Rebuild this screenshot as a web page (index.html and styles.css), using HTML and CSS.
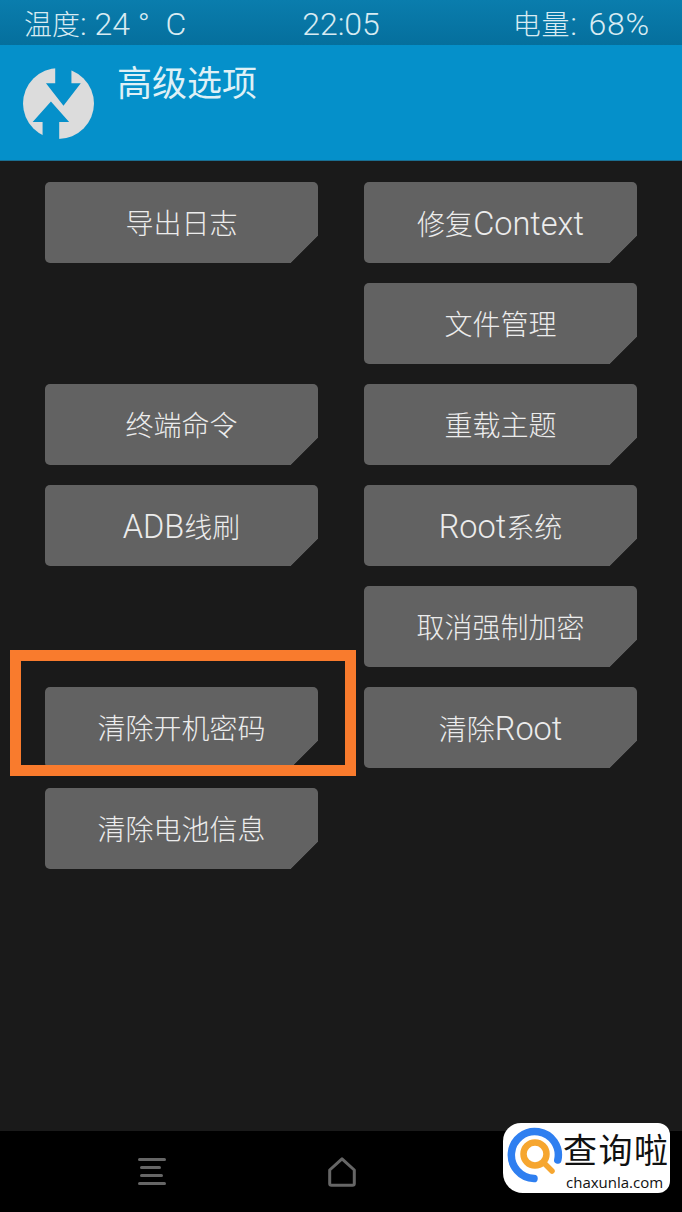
FILE: index.html
```html
<!DOCTYPE html>
<html lang="zh-CN">
<head>
<meta charset="utf-8">
<title>高级选项</title>
<link rel="stylesheet" href="styles.css">
</head>
<body>
<div class="screen">
  <div class="status">
    <span class="status-temp"><span class="cjk">温度</span>: 24 ° &nbsp;C</span>
    <span class="status-time">22:05</span>
    <span class="status-batt"><span class="cjk">电量</span>: 68%</span>
  </div>
  <header class="header">
    <svg class="logo" viewBox="8.6 8 71.4 71.4" aria-hidden="true">
      <circle cx="44.3" cy="43.7" r="35.7" fill="#dcdcdc"/>
      <polygon fill="#0590ca" points="41,0 41,23.3 31.7,23.3 49.3,46 66.7,23.3 57.3,23.3 57.3,0"/>
      <polygon fill="#0590ca" points="28.3,90 28.3,62.3 18.3,62.3 36.7,41.7 55,62.3 45,62.3 45,90"/>
    </svg>
    <h1 class="title">高级选项</h1>
  </header>
  <main class="main">
    <div class="grid">
      <button class="btn">导出日志</button>
      <button class="btn">修复<span class="lat">Context</span></button>
      <div></div>
      <button class="btn">文件管理</button>
      <button class="btn">终端命令</button>
      <button class="btn">重载主题</button>
      <button class="btn"><span class="lat">ADB</span>线刷</button>
      <button class="btn"><span class="lat">Root</span>系统</button>
      <div></div>
      <button class="btn">取消强制加密</button>
      <button class="btn">清除开机密码</button>
      <button class="btn">清除<span class="lat">Root</span></button>
      <button class="btn">清除电池信息</button>
    </div>
    <div class="highlight"></div>
  </main>
  <nav class="nav">
    <div class="nav-slot">
      <svg class="icon-menu" viewBox="0 0 28 27" aria-hidden="true">
        <g stroke="#666" stroke-width="3" stroke-linecap="round">
          <line x1="1.5" y1="1.5" x2="26.5" y2="1.5"/>
          <line x1="3.5" y1="9.5" x2="21.5" y2="9.5"/>
          <line x1="3.5" y1="17.5" x2="23.5" y2="17.5"/>
          <line x1="1.5" y1="25.5" x2="26.5" y2="25.5"/>
        </g>
      </svg>
    </div>
    <div class="nav-slot">
      <svg class="icon-home" viewBox="0 0 28 30" aria-hidden="true">
        <path d="M14 1.8 L26.3 13 V26.5 Q26.3 28.3 24.5 28.3 H3.5 Q1.7 28.3 1.7 26.5 V13 Z" fill="none" stroke="#666" stroke-width="3" stroke-linejoin="round"/>
      </svg>
    </div>
    <div class="nav-slot"></div>
  </nav>
  <div class="watermark">
    <svg class="wm-logo" viewBox="0 0 60 60" aria-hidden="true">
      <path d="M27 52.5 A23.5 23.5 0 1 1 50.8 34" fill="none" stroke="#2f7ff0" stroke-width="7.5" stroke-linecap="round"/>
      <circle cx="28" cy="28" r="11.5" fill="none" stroke="#f6a630" stroke-width="6.5"/>
      <line x1="37" y1="37" x2="45" y2="45" stroke="#f6a630" stroke-width="5.5" stroke-linecap="round"/>
    </svg>
    <div class="wm-text">
      <span class="wm-cn">查询啦</span>
      <span class="wm-en">chaxunla.com</span>
    </div>
  </div>
</div>
</body>
</html>
```
FILE: styles.css
```css
* { box-sizing: border-box; }
html, body { margin: 0; padding: 0; }
body {
  width: 682px;
  height: 1212px;
  overflow: hidden;
  background: #1a1a1a;
  font-family: "Roboto", "Noto Sans CJK SC", sans-serif;
}
.screen {
  position: relative;
  display: flex;
  flex-direction: column;
  width: 682px;
  height: 1212px;
}
.status {
  flex: 0 0 45px;
  min-height: 0;
  display: grid;
  grid-template-columns: 1fr auto 1fr;
  align-items: center;
  padding: 3px 32px 0 24px;
  background: linear-gradient(#0a7dad, #056f9d);
  color: #d8ebf2;
  font-size: 32px;
  font-weight: 300;
  line-height: 42px;
  white-space: nowrap;
}
.cjk { font-size: 28px; line-height: 1; }
.status-time { margin-left: 8px; }
.status-batt { justify-self: end; letter-spacing: 0.8px; word-spacing: 2px; }
.header {
  flex: 0 0 116px;
  display: flex;
  align-items: flex-start;
  padding: 23px 0 0 23px;
  background: #0590ca;
  border-bottom: 1px solid #1a6f92;
}
.logo { width: 71px; height: 71px; flex: none; }
.title {
  margin: -3px 0 0 23px;
  color: #dff0f6;
  font-size: 35px;
  font-weight: 400;
  line-height: 40px;
}
.main {
  position: relative;
  flex: 1;
  padding: 21px 0 0 45px;
}
.grid {
  display: grid;
  grid-template-columns: 273px 273px;
  grid-auto-rows: 81px;
  column-gap: 46px;
  row-gap: 20px;
}
.btn {
  padding: 4px 0 0;
  border: 0;
  border-radius: 5px;
  background: linear-gradient(315deg, transparent 19px, #626262 19.6px);
  color: #ececec;
  font-family: inherit;
  font-size: 28px;
  font-weight: 300;
  line-height: 1;
}
.lat { font-size: 32.5px; }
.highlight {
  position: absolute;
  left: 10px;
  top: 489px;
  width: 346px;
  height: 126px;
  border: 11px solid #f97b2d;
}
.nav {
  flex: 0 0 81px;
  display: grid;
  grid-template-columns: 304px 76px 302px;
  background: #000;
}
.nav-slot {
  display: flex;
  justify-content: center;
  align-items: flex-start;
  padding-top: 26px;
}
.nav-slot:first-child { justify-content: flex-start; padding-left: 138px; padding-top: 27px; }
.icon-menu { width: 28px; height: 27px; }
.icon-home { width: 28px; height: 30px; }
.watermark {
  position: absolute;
  left: 503px;
  top: 1123px;
  width: 167px;
  height: 70px;
  display: flex;
  align-items: flex-start;
  padding: 3px 0 0 4px;
  background: #fff;
  border-radius: 18px 12px 12px 20px;
  overflow: hidden;
}
.wm-logo { width: 60px; height: 60px; flex: none; }
.wm-text {
  display: flex;
  flex-direction: column;
  align-items: flex-start;
  margin-left: -4px;
}
.wm-cn {
  color: #111;
  font-family: "Noto Sans CJK SC", sans-serif;
  font-size: 34px;
  letter-spacing: 1.5px;
  line-height: 46px;
  white-space: nowrap;
}
.wm-en {
  margin: 0 0 0 3px;
  color: #111;
  font-family: "Open Sans", sans-serif;
  font-size: 15px;
  line-height: 20px;
  white-space: nowrap;
}
```
